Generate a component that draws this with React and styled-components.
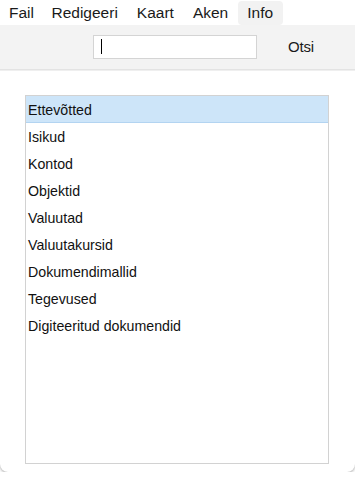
import React from "react";
import styled, { createGlobalStyle } from "styled-components";

const GlobalStyle = createGlobalStyle`
    html, body {
        margin: 0;
        padding: 0;
        background: #ffffff;
    }

    body {
        font-family: "Liberation Sans", Arial, sans-serif;
        color: #1a1a1a;
    }
`;

const Window = styled.div`
    width: 355px;
    height: 472px;
    background: #ffffff;
    border-radius: 0 0 8px 8px;
    box-shadow: 0 1px 3px rgba(0, 0, 0, 0.35);
    display: flex;
    flex-direction: column;
    overflow: hidden;
`;

const MenuBar = styled.div`
    height: 25px;
    display: flex;
    align-items: stretch;
    padding: 1px 0 0 1px;
    box-sizing: border-box;
`;

const MenuItem = styled.div`
    display: flex;
    align-items: center;
    padding: 0 ${(p) => p.$pad || 9}px;
    font-size: 15.5px;
    border-radius: 4px;
    background: ${(p) => (p.$hover ? "#f2f2f2" : "transparent")};
`;

const Toolbar = styled.div`
    height: 45px;
    background: #f3f3f3;
    border-bottom: 1px solid #e3e3e3;
    box-shadow: 0 1px 0 #efefef;
    display: flex;
    align-items: center;
    padding-left: 93px;
`;

const SearchBox = styled.div`
    width: 164px;
    height: 24px;
    box-sizing: border-box;
    background: #ffffff;
    border: 1px solid #d4d4d4;
    display: flex;
    align-items: center;
    padding-left: 7px;
`;

const Caret = styled.span`
    width: 1px;
    height: 15px;
    background: #000000;
`;

const SearchButton = styled.div`
    margin-left: 31px;
    font-size: 15px;
    letter-spacing: -0.2px;
`;

const Body = styled.div`
    flex: 1;
    padding: 25px 26px 8px 25px;
    display: flex;
`;

const List = styled.div`
    flex: 1;
    height: 367px;
    border: 1px solid #d2d2d2;
    background: #ffffff;
    display: flex;
    flex-direction: column;
`;

const Row = styled.div`
    height: 27px;
    flex-shrink: 0;
    box-sizing: border-box;
    display: flex;
    align-items: center;
    padding: 1px 0 0 2px;
    font-size: 14.2px;
    color: #111111;
    background: ${(p) => (p.$selected ? "#cde5f9" : "transparent")};
    border-bottom: 1px solid ${(p) => (p.$selected ? "#b3d4f1" : "transparent")};
`;

const menus = ["Fail", "Redigeeri", "Kaart", "Aken", "Info"];

const items = [
    "Ettevõtted",
    "Isikud",
    "Kontod",
    "Objektid",
    "Valuutad",
    "Valuutakursid",
    "Dokumendimallid",
    "Tegevused",
    "Digiteeritud dokumendid",
];

export default function App() {
    return (
        <>
            <GlobalStyle />
            <Window>
                <MenuBar>
                    {menus.map((m, i) => (
                        <MenuItem
                            key={m}
                            $hover={m === "Info"}
                            $pad={i === 0 ? 8 : 9.5}
                        >
                            {m}
                        </MenuItem>
                    ))}
                </MenuBar>
                <Toolbar>
                    <SearchBox>
                        <Caret />
                    </SearchBox>
                    <SearchButton>Otsi</SearchButton>
                </Toolbar>
                <Body>
                    <List>
                        {items.map((item, i) => (
                            <Row key={item} $selected={i === 0}>
                                {item}
                            </Row>
                        ))}
                    </List>
                </Body>
            </Window>
        </>
    );
}
